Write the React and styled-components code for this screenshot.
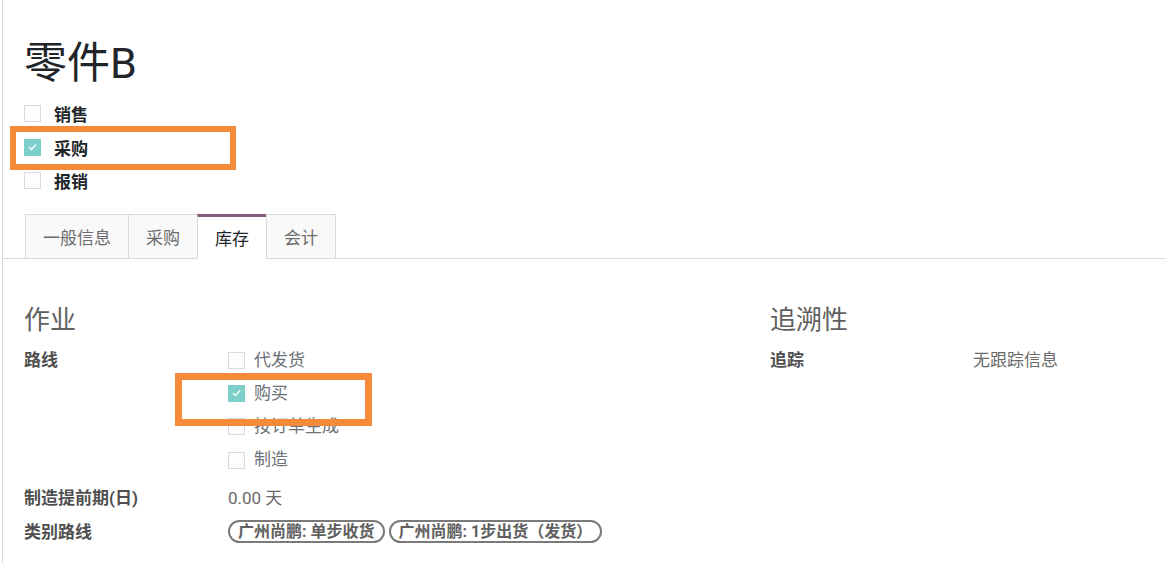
import React from 'react';
import styled, { createGlobalStyle } from 'styled-components';

const GlobalStyle = createGlobalStyle`
  html, body {
    margin: 0;
    padding: 0;
    background: #fff;
    font-family: Roboto, "Noto Sans CJK SC", sans-serif;
  }
`;

// sheet with thin rule on the left
const Page = styled.div`
  position: relative;
  margin-left: 2px;
  min-height: 563px;
  border-left: 1px solid #d8dadd;
  overflow: hidden;
`;

const Header = styled.div`
  padding: 38px 0 16px 21px;
`;

const Title = styled.h1`
  margin: 0 0 9px 0;
  font-size: 43px;
  font-weight: 400;
  line-height: 50px;
  color: #212529;
`;

const OptionRow = styled.label`
  display: flex;
  align-items: center;
  gap: ${p => p.$gap || 13}px;
  height: ${p => p.$height || 33.5}px;
  font-size: 17px;
  font-weight: ${p => (p.$bold ? 700 : 400)};
  color: ${p => (p.$bold ? '#212529' : '#6c7077')};
`;

const Box = styled.span`
  box-sizing: border-box;
  flex: none;
  width: 17px;
  height: 17px;
  border: 1px solid ${p => (p.$checked ? '#7dcfca' : '#d9dadb')};
  background: ${p => (p.$checked ? '#7dcfca' : '#fdfdfd')};
  display: flex;
  align-items: center;
  justify-content: center;
`;

const Check = ({ checked }) => (
  <Box $checked={checked}>
    {checked && (
      <svg width="9" height="8" viewBox="0 0 9 8">
        <path d="M1 4.2 L3.5 6.5 L8 1.5" stroke="#eaf7f6" strokeWidth="1.8" fill="none" />
      </svg>
    )}
  </Box>
);

// notebook tabs
const TabBar = styled.div`
  display: flex;
  padding-left: 22px;
  border-bottom: 1px solid #d8dadd;
`;

const Tab = styled.div`
  box-sizing: border-box;
  height: 45px;
  margin-bottom: -1px;
  margin-left: -1px;
  padding: 0 17px;
  display: flex;
  align-items: center;
  font-size: 17px;
  color: ${p => (p.$active ? '#212529' : '#6c6c6c')};
  background: ${p => (p.$active ? '#fff' : '#f9f9f9')};
  border: 1px solid #d8dadd;
  border-top: ${p => (p.$active ? '3px solid #875a7b' : '1px solid #d8dadd')};
  border-bottom: ${p => (p.$active ? '1px solid #fff' : '1px solid #d8dadd')};
  &:first-child { margin-left: 0; }
`;

const Content = styled.div`
  display: grid;
  grid-template-columns: 722px 1fr;
  column-gap: 24px;
  padding: 44px 0 0 21px;
`;

const Group = styled.div`
  display: flex;
  flex-direction: column;
`;

const GroupTitle = styled.h2`
  margin: 0 0 7px 0;
  font-size: 26px;
  font-weight: 400;
  line-height: 34px;
  color: #5f5f5f;
`;

const Field = styled.div`
  display: grid;
  grid-template-columns: ${p => p.$labelWidth || 204}px 1fr;
  margin-bottom: ${p => p.$after || 0}px;
`;

const FieldLabel = styled.div`
  font-size: 17px;
  font-weight: 700;
  line-height: ${p => p.$line || 33.3}px;
  color: #4f4f4f;
`;

const FieldValue = styled.div`
  display: flex;
  flex-direction: ${p => (p.$column ? 'column' : 'row')};
  align-items: ${p => (p.$column ? 'stretch' : 'center')};
  gap: ${p => (p.$column ? 0 : 4)}px;
  font-size: 17px;
  line-height: ${p => p.$line || 33.3}px;
  color: #6a6a6a;
`;

const Tag = styled.span`
  box-sizing: border-box;
  height: 23px;
  padding: 0 8px;
  display: inline-flex;
  align-items: center;
  border: 2px solid #7a7a7a;
  border-radius: 12px;
  font-size: 16px;
  font-weight: 700;
  line-height: 1;
  color: #606060;
  white-space: nowrap;
`;

// annotation frames drawn over the form
const Marker = styled.div`
  position: absolute;
  box-sizing: border-box;
  border: ${p => p.$w}px solid #f68a3b;
  pointer-events: none;
`;

const routes = [
  { name: '代发货', checked: false },
  { name: '购买', checked: true },
  { name: '按订单生成', checked: false },
  { name: '制造', checked: false },
];

export default function App() {
  return (
    <>
      <GlobalStyle />
      <Page>
        <Header>
          <Title>零件B</Title>
          <OptionRow $bold><Check />销售</OptionRow>
          <OptionRow $bold><Check checked />采购</OptionRow>
          <OptionRow $bold><Check />报销</OptionRow>
        </Header>

        <TabBar>
          <Tab>一般信息</Tab>
          <Tab>采购</Tab>
          <Tab $active>库存</Tab>
          <Tab>会计</Tab>
        </TabBar>

        <Content>
          <Group>
            <GroupTitle>作业</GroupTitle>
            <Field $after={4}>
              <FieldLabel>路线</FieldLabel>
              <FieldValue $column>
                {routes.map(r => (
                  <OptionRow key={r.name} $gap={9} $height={33.3}>
                    <Check checked={r.checked} />
                    {r.name}
                  </OptionRow>
                ))}
              </FieldValue>
            </Field>
            <Field>
              <FieldLabel $line={34}>制造提前期(日)</FieldLabel>
              <FieldValue $line={34}>0.00 天</FieldValue>
            </Field>
            <Field>
              <FieldLabel $line={34}>类别路线</FieldLabel>
              <FieldValue $line={34}>
                <Tag>广州尚鹏: 单步收货</Tag>
                <Tag>广州尚鹏: 1步出货（发货）</Tag>
              </FieldValue>
            </Field>
          </Group>

          <Group>
            <GroupTitle>追溯性</GroupTitle>
            <Field $labelWidth={203}>
              <FieldLabel>追踪</FieldLabel>
              <FieldValue>无跟踪信息</FieldValue>
            </Field>
          </Group>
        </Content>

        <Marker $w={6} style={{ left: 7, top: 126, width: 226, height: 44 }} />
        <Marker $w={7} style={{ left: 172, top: 373, width: 197, height: 53 }} />
      </Page>
    </>
  );
}
